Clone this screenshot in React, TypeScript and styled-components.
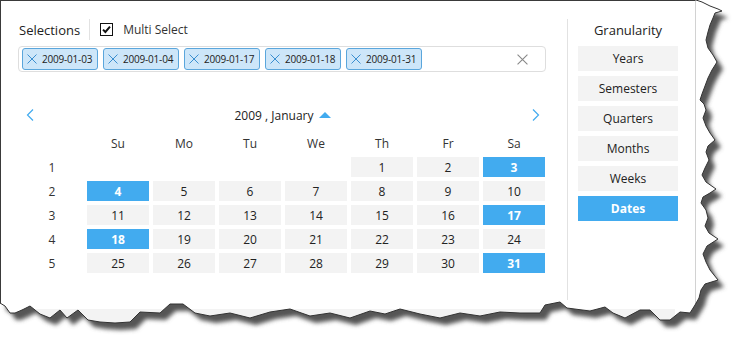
import React from "react";
import styled, { createGlobalStyle } from "styled-components";

const GlobalStyle = createGlobalStyle`
  body {
    margin: 0;
    background: #fff;
    font-family: "Segoe UI", "Open Sans", sans-serif;
    color: #222;
  }
`;

const Frame = styled.div`
  width: 744px;
  height: 346px;
  position: relative;
  overflow: hidden;
  background: #fff;
`;

const Window = styled.div`
  width: 696px;
  height: 346px;
  box-sizing: border-box;
  border-top: 1px solid #3a3a3a;
  border-left: 1px solid #3a3a3a;
  border-right: 1px solid #d2d2d2;
  display: flex;
  flex-direction: column;
`;

const Body = styled.div`
  display: flex;
  height: 299px;
`;

const Main = styled.div`
  width: 566px;
  box-sizing: border-box;
  padding: 18px 0 0 17px;
`;

const Divider = styled.div`
  width: 1px;
  margin-top: 18px;
  height: 281px;
  background: #e2e2e2;
`;

const Side = styled.div`
  flex: 1;
  padding: 18px 0 0 10px;
`;

const HeaderRow = styled.div`
  display: flex;
  align-items: center;
  height: 21px;
`;

const Title = styled.div`
  font-size: 13px;
  color: #222;
  padding-left: 1px;
`;

const VSep = styled.div`
  width: 1px;
  height: 21px;
  background: #e2e2e2;
  margin: 0 10px 0 9px;
`;

const CheckBox = styled.span`
  width: 13px;
  height: 13px;
  box-sizing: border-box;
  border: 1.5px solid #111;
  display: inline-flex;
  align-items: center;
  justify-content: center;
  margin-right: 10px;
`;

const CheckLabel = styled.span`
  font-size: 12px;
  color: #333;
`;

const TagBox = styled.div`
  margin-top: 6px;
  width: 528px;
  height: 26px;
  box-sizing: border-box;
  border: 1px solid #dedede;
  border-radius: 4px;
  padding: 1px 3px;
  display: flex;
  align-items: center;
  gap: 5px;
`;

const Tag = styled.div`
  height: 22px;
  width: 76px;
  flex: none;
  box-sizing: border-box;
  border: 1px solid #5aa6dc;
  border-radius: 3px;
  background: #cde6f9;
  display: flex;
  align-items: center;
  padding-left: 4px;
  gap: 5px;
  font-size: 10px;
  letter-spacing: -0.2px;
  color: #222;
  white-space: nowrap;
  overflow: hidden;
`;

const ClearBtn = styled.span`
  margin-left: auto;
  margin-right: 14px;
  display: inline-flex;
`;

const Calendar = styled.div`
  margin: 33px 0 0 3px;
  width: 524px;
`;

const NavRow = styled.div`
  height: 20px;
  display: flex;
  align-items: center;
  justify-content: space-between;
  padding: 0 5px;
`;

const MonthTitle = styled.div`
  display: flex;
  align-items: center;
  gap: 6px;
  font-size: 12px;
  color: #222;
`;

const Grid = styled.div`
  margin-top: 8px;
  display: grid;
  grid-template-columns: repeat(8, 62px);
  grid-auto-rows: 20px;
  gap: 4px;
`;

const HeadCell = styled.div`
  display: flex;
  align-items: center;
  justify-content: center;
  font-size: 12px;
  color: #333;
`;

const DayCell = styled.div<{ $selected?: boolean; $empty?: boolean }>`
  display: flex;
  align-items: center;
  justify-content: center;
  font-size: 12px;
  background: ${(p) => (p.$empty ? "transparent" : p.$selected ? "#42abef" : "#f3f3f3")};
  color: ${(p) => (p.$selected ? "#fff" : "#222")};
  font-weight: ${(p) => (p.$selected ? 700 : 400)};
`;

const SideTitle = styled.div`
  width: 100px;
  height: 21px;
  display: flex;
  align-items: center;
  justify-content: center;
  font-size: 13px;
  color: #222;
`;

const GranList = styled.div`
  margin-top: 6px;
  display: flex;
  flex-direction: column;
  gap: 5px;
`;

const GranButton = styled.div<{ $active?: boolean }>`
  width: 100px;
  height: 25px;
  display: flex;
  align-items: center;
  justify-content: center;
  font-size: 12px;
  background: ${(p) => (p.$active ? "#42abef" : "#f3f3f3")};
  color: ${(p) => (p.$active ? "#fff" : "#222")};
  font-weight: ${(p) => (p.$active ? 700 : 400)};
`;

const Strip = styled.div`
  margin: 9px 20px 0 20px;
  height: 20px;
  background: #f3f3f3;
`;

const Torn = styled.svg`
  position: absolute;
  left: 0;
  top: 0;
  pointer-events: none;
`;

const Cross = ({ size, color }: { size: number; color: string }) => (
  <svg width={size} height={size} viewBox="0 0 10 10" style={{ flex: "none" }}>
    <path d="M0.5 0.5 L9.5 9.5 M9.5 0.5 L0.5 9.5" stroke={color} strokeWidth="1" fill="none" />
  </svg>
);

const tags = ["2009-01-03", "2009-01-04", "2009-01-17", "2009-01-18", "2009-01-31"];
const days = ["Su", "Mo", "Tu", "We", "Th", "Fr", "Sa"];
const selected = [3, 4, 17, 18, 31];
const weeks: (number | null)[][] = [
  [null, null, null, null, 1, 2, 3],
  [4, 5, 6, 7, 8, 9, 10],
  [11, 12, 13, 14, 15, 16, 17],
  [18, 19, 20, 21, 22, 23, 24],
  [25, 26, 27, 28, 29, 30, 31],
];
const granularity = ["Years", "Semesters", "Quarters", "Months", "Weeks", "Dates"];

// torn paper edge: right side going down, then bottom going left
const edge: [number, number][] = [
  [696, 0], [702, 2], [710, 6], [718, 9], [722, 11], [715, 13], [713, 18], [710, 25],
  [708, 32], [706, 40], [708, 48], [713, 55], [717, 62], [712, 70], [708, 78], [705, 86],
  [702, 94], [700, 100], [704, 104], [706, 110], [703, 118], [706, 126], [710, 133],
  [715, 140], [708, 146], [706, 152], [709, 160], [705, 168], [702, 175], [706, 182],
  [716, 189], [710, 193], [703, 197], [701, 203], [706, 210], [708, 218], [705, 226],
  [709, 233], [718, 239], [707, 246], [703, 254], [706, 262], [710, 270], [718, 280],
  [705, 284], [701, 290], [699, 298], [695, 305], [690, 313], [680, 312], [670, 320],
  [660, 320], [650, 310], [640, 310], [625, 318], [613, 313], [605, 307], [590, 311],
  [567, 308], [560, 302], [545, 305], [540, 313], [520, 313], [500, 312], [480, 316],
  [460, 313], [440, 318], [420, 314], [400, 309], [385, 314], [370, 311], [350, 318],
  [330, 313], [310, 316], [290, 309], [270, 312], [250, 318], [230, 313], [210, 316],
  [195, 313], [183, 304], [170, 304], [160, 313], [140, 312], [130, 322], [115, 323],
  [100, 322], [88, 320], [78, 310], [67, 318], [60, 310], [50, 318], [40, 314], [30, 306],
  [22, 310], [15, 313], [10, 313], [5, 306], [0, 303],
];
const edgeLine = edge.map(([x, y], i) => `${i ? "L" : "M"}${x} ${y}`).join(" ");
const pagePoly = `M0 0 ${edgeLine.replace(/^M/, "L")} Z`;
const outside = `M-10 -10 H760 V360 H-10 Z ${pagePoly}`;

const TornEdge = () => (
  <Torn width={744} height={346} viewBox="0 0 744 346">
    <defs>
      <clipPath id="outside">
        <path d={outside} clipRule="evenodd" />
      </clipPath>
      <filter id="blur" x="-5%" y="-5%" width="110%" height="110%">
        <feGaussianBlur stdDeviation="2" />
      </filter>
    </defs>
    <path d={outside} fill="#fff" fillRule="evenodd" />
    <g clipPath="url(#outside)">
      <path d={pagePoly} transform="translate(6 7)" fill="#555" filter="url(#blur)" />
    </g>
    <path d={edgeLine} fill="none" stroke="#333" strokeWidth="1" />
  </Torn>
);

export default function App() {
  return (
    <Frame>
      <GlobalStyle />
      <Window>
        <Body>
          <Main>
            <HeaderRow>
              <Title>Selections</Title>
              <VSep />
              <CheckBox>
                <svg width="9" height="9" viewBox="0 0 9 9">
                  <path d="M1 4.6 L3.4 7 L8 1.6" stroke="#111" strokeWidth="2" fill="none" />
                </svg>
              </CheckBox>
              <CheckLabel>Multi Select</CheckLabel>
            </HeaderRow>
            <TagBox>
              {tags.map((t) => (
                <Tag key={t}>
                  <Cross size={10} color="#3b8fd0" />
                  {t}
                </Tag>
              ))}
              <ClearBtn>
                <Cross size={11} color="#888" />
              </ClearBtn>
            </TagBox>
            <Calendar>
              <NavRow>
                <svg width="8" height="12" viewBox="0 0 8 12">
                  <path d="M7 0.5 L1.5 6 L7 11.5" stroke="#42abef" strokeWidth="1.2" fill="none" />
                </svg>
                <MonthTitle>
                  2009 , January
                  <svg width="12" height="6" viewBox="0 0 12 6">
                    <path d="M0 6 L6 0 L12 6 Z" fill="#42abef" />
                  </svg>
                </MonthTitle>
                <svg width="8" height="12" viewBox="0 0 8 12">
                  <path d="M1 0.5 L6.5 6 L1 11.5" stroke="#42abef" strokeWidth="1.2" fill="none" />
                </svg>
              </NavRow>
              <Grid>
                <HeadCell />
                {days.map((d) => (
                  <HeadCell key={d}>{d}</HeadCell>
                ))}
                {weeks.map((week, wi) => (
                  <React.Fragment key={wi}>
                    <HeadCell>{wi + 1}</HeadCell>
                    {week.map((d, di) => (
                      <DayCell key={di} $empty={d === null} $selected={d !== null && selected.includes(d)}>
                        {d}
                      </DayCell>
                    ))}
                  </React.Fragment>
                ))}
              </Grid>
            </Calendar>
          </Main>
          <Divider />
          <Side>
            <SideTitle>Granularity</SideTitle>
            <GranList>
              {granularity.map((g) => (
                <GranButton key={g} $active={g === "Dates"}>
                  {g}
                </GranButton>
              ))}
            </GranList>
          </Side>
        </Body>
        <Strip />
      </Window>
      <TornEdge />
    </Frame>
  );
}
